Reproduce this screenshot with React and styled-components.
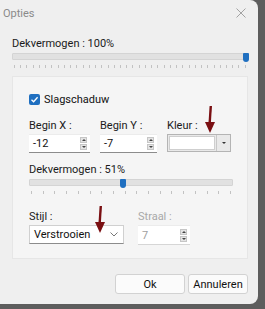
import styled, { createGlobalStyle } from 'styled-components';

const Global = createGlobalStyle`
  html, body {
    margin: 0;
    padding: 0;
    background: #5d5d5d;
    font-family: Roboto, "Open Sans", "Noto Sans", sans-serif;
  }
`;

const Dialog = styled.div`
  width: 258px;
  height: 304px;
  background: #efefef;
  border-radius: 0 8px 8px 0;
  box-sizing: border-box;
  padding: 0 10px 0 12px;
  color: #111;
`;

const TitleBar = styled.div`
  height: 26px;
  display: flex;
  align-items: center;
  justify-content: space-between;
  margin-left: -9px;
  font-size: 11px;
  color: #8a8a8a;
`;

const Label = styled.div`
  font-size: 11px;
  line-height: 13px;
  color: ${p => (p.$disabled ? '#a8a8a8' : '#1a1a1a')};
  white-space: nowrap;
`;

const SliderWrap = styled.div`
  position: relative;
  height: 18px;
  margin-top: 2px;
`;

const Track = styled.div`
  height: 5px;
  background: #e1e1e1;
  border: 1px solid #d4d4d4;
  border-radius: 1px;
  margin-top: 3px;
`;

const Ticks = styled.div`
  display: flex;
  justify-content: space-between;
  padding: 0 2px;
  margin-top: 5px;
  span {
    width: 1px;
    height: 3px;
    background: #c2c2c2;
  }
`;

const Thumb = styled.div`
  position: absolute;
  top: 0;
  width: 6px;
  height: 9px;
  background: #1f6fc0;
  border-radius: 1px 1px 3px 3px;
`;

const Panel = styled.div`
  margin-top: 5px;
  background: #f5f5f5;
  border: 1px solid #e6e6e6;
  height: 183px;
  box-sizing: border-box;
  padding: 16px 14px 0 16px;
  position: relative;
`;

const CheckRow = styled.label`
  display: flex;
  align-items: center;
  gap: 4px;
  font-size: 11px;
`;

const Check = styled.span`
  width: 11px;
  height: 11px;
  border-radius: 2px;
  background: #1f6fc0;
  display: inline-flex;
  align-items: center;
  justify-content: center;
`;

const FieldRow = styled.div`
  display: flex;
  gap: 10px;
  margin-top: ${p => p.$top}px;
`;

const Field = styled.div`
  display: flex;
  flex-direction: column;
  gap: 2px;
  width: ${p => p.$w}px;
`;

const Input = styled.div`
  height: 17px;
  background: #fff;
  border-top: 1px solid #ececec;
  border-bottom: 1px solid #8c8c8c;
  display: flex;
  align-items: center;
  justify-content: space-between;
  padding-left: 4px;
  font-size: 11px;
  color: ${p => (p.$disabled ? '#a0a0a0' : '#111')};
  ${p => p.$disabled && 'border-bottom-color: #d6d6d6;'}
`;

const Spin = styled.div`
  display: flex;
  flex-direction: column;
  gap: 1px;
  margin-right: 3px;
  span {
    width: 7px;
    height: 6px;
    background: #e4e4e4;
    border: 1px solid #c6c6c6;
    box-sizing: border-box;
    display: flex;
    align-items: center;
    justify-content: center;
  }
  span::after {
    content: '';
    border-left: 2px solid transparent;
    border-right: 2px solid transparent;
  }
  span:first-child::after { border-bottom: 2px solid #444; }
  span:last-child::after { border-top: 2px solid #444; }
`;

const ColorBox = styled.div`
  height: 18px;
  display: flex;
  border: 1px solid #b4b4b4;
  background: #e9e9e9;
  box-sizing: border-box;
`;

const Swatch = styled.div`
  flex: 1;
  margin: 1px;
  background: #fff;
  border: 1px solid #cfcfcf;
`;

const DropBtn = styled.div`
  width: 13px;
  display: flex;
  align-items: center;
  justify-content: center;
  border-left: 1px solid #c8c8c8;
  &::after {
    content: '';
    border-left: 2px solid transparent;
    border-right: 2px solid transparent;
    border-top: 2px solid #333;
  }
`;

const Select = styled.div`
  height: 19px;
  background: #fff;
  border: 1px solid #d0d0d0;
  border-bottom-color: #8c8c8c;
  box-sizing: border-box;
  display: flex;
  align-items: center;
  justify-content: space-between;
  padding: 0 5px 0 4px;
  font-size: 11px;
`;

const Arrow = styled.svg`
  position: absolute;
`;

const Footer = styled.div`
  display: flex;
  justify-content: flex-end;
  gap: 3px;
  margin-top: 15px;
`;

const Button = styled.button`
  width: ${p => p.$w}px;
  height: 20px;
  background: #fbfbfb;
  border: 1px solid #d2d2d2;
  border-radius: 3px;
  font-family: inherit;
  font-size: 11px;
  color: #111;
  padding: 0;
`;

const Slider = ({ pos, ticks }) => (
  <SliderWrap>
    <Track />
    <Thumb style={{ left: pos }} />
    <Ticks>
      {Array.from({ length: ticks }).map((_, i) => <span key={i} />)}
    </Ticks>
  </SliderWrap>
);

const Spinner = () => (
  <Spin>
    <span />
    <span />
  </Spin>
);

const DownArrow = ({ left, top }) => (
  <Arrow width="10" height="28" viewBox="0 0 10 28" style={{ left, top }}>
    <path d="M5.8 0 L4.6 18" stroke="#7a0f12" strokeWidth="2.4" />
    <path d="M0 16 L10 16 L5 27 Z" fill="#7a0f12" />
  </Arrow>
);

export default function App() {
  return (
    <>
      <Global />
      <Dialog>
        <TitleBar>
          <span>Opties</span>
          <svg width="10" height="10" viewBox="0 0 10 10" style={{ marginRight: 2 }}>
            <path d="M0.5 0.5 L9.5 9.5 M9.5 0.5 L0.5 9.5" stroke="#a2a2a2" strokeWidth="1" />
          </svg>
        </TitleBar>
        <Label style={{ marginTop: 11 }}>Dekvermogen : 100%</Label>
        <Slider pos={231} ticks={38} />
        <Panel>
          <CheckRow>
            <Check>
              <svg width="9" height="9" viewBox="0 0 9 9">
                <path d="M1.5 4.8 L3.6 6.8 L7.6 2.2" stroke="#fff" strokeWidth="1.3" fill="none" />
              </svg>
            </Check>
            Slagschaduw
          </CheckRow>
          <FieldRow $top={13}>
            <Field $w={61}>
              <Label>Begin X :</Label>
              <Input>-12<Spinner /></Input>
            </Field>
            <Field $w={57}>
              <Label>Begin Y :</Label>
              <Input>-7<Spinner /></Input>
            </Field>
            <Field $w={64}>
              <Label>Kleur :</Label>
              <ColorBox>
                <Swatch />
                <DropBtn />
              </ColorBox>
            </Field>
          </FieldRow>
          <Label style={{ marginTop: 10 }}>Dekvermogen : 51%</Label>
          <Slider pos={91} ticks={18} />
          <FieldRow $top={13}>
            <Field $w={95}>
              <Label>Stijl :</Label>
              <Select>
                Verstrooien
                <svg width="8" height="5" viewBox="0 0 8 5">
                  <path d="M0.5 0.5 L4 4 L7.5 0.5" stroke="#777" fill="none" />
                </svg>
              </Select>
            </Field>
            <Field $w={52} style={{ marginLeft: 4 }}>
              <Label $disabled>Straal :</Label>
              <Input $disabled style={{ height: 18 }}>7<Spinner /></Input>
            </Field>
          </FieldRow>
          <DownArrow left={192} top={29} />
          <DownArrow left={82} top={129} />
        </Panel>
        <Footer>
          <Button $w={70}>Ok</Button>
          <Button $w={60}>Annuleren</Button>
        </Footer>
      </Dialog>
    </>
  );
}
